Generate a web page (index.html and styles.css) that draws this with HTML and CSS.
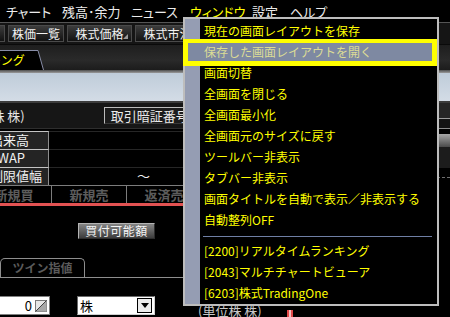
FILE: index.html
```html
<!DOCTYPE html>
<html lang="ja">
<head>
<meta charset="utf-8">
<title>Window menu</title>
<link rel="stylesheet" href="styles.css">
</head>
<body>
<div class="screen">
  <nav class="menubar">
    <span class="mb mb-chart">チャート</span>
    <span class="mb mb-zan">残高･余力</span>
    <span class="mb mb-news">ニュース</span>
    <span class="mb mb-win">ウィンドウ</span>
    <span class="mb mb-set">設定</span>
    <span class="mb">ヘルプ</span>
  </nav>

  <div class="toolbar">
    <span class="tbtn tbtn-cut"></span>
    <span class="tbtn tbtn-w56">株価一覧</span>
    <span class="tbtn tbtn-w65 tbtn-mark">株式価格</span>
    <span class="tbtn tbtn-w65">株式市況</span>
    <span class="tbtn tbtn-w65"></span>
    <span class="tbtn tbtn-w65"></span>
  </div>

  <div class="tabstrip">
    <div class="wtab">
      <svg class="wtab-shape" width="44" height="20" viewBox="0 0 44 20">
        <path d="M0 0.5 H38 L43.5 20 H0 Z" fill="#000"/>
        <polyline points="0,0.5 38,0.5 43.5,20" fill="none" stroke="#878ca6" stroke-width="1"/>
      </svg>
      <span class="wtab-text">ランキング</span>
    </div>
  </div>
  <div class="strip-sep"></div>
  <div class="lightarea"></div>
  <div class="panel-sep"></div>

  <div class="panel">
    <div class="panel-main">
      <div class="phead">
        <span class="unit">(単位株 株)</span>
        <span class="pinbox">取引暗証番号</span>
      </div>
      <div class="qrows">
        <div class="qrow"><span class="qlabel">出来高</span><span class="qval"></span></div>
        <div class="qrow"><span class="qlabel">VWAP</span><span class="qval"></span></div>
        <div class="qrow"><span class="qlabel">制限値幅</span><span class="qval qval-range">～</span></div>
      </div>
      <div class="otabs">
        <span class="otab">新規買</span>
        <span class="otab">新規売</span>
        <span class="otab">返済売</span>
      </div>
      <div class="redline"></div>
      <div class="btnrow"><span class="gbtn">買付可能額</span></div>
      <div class="subtabs"><span class="subtab">ツイン指値</span></div>
      <div class="inputrow">
        <span class="numin">
          <span class="numval">0</span>
          <svg class="spin" width="12" height="12" viewBox="0 0 12 12">
            <rect x="0.5" y="0.5" width="11" height="11" fill="#e6e6e6" stroke="#7a7a7a"/>
            <polygon points="11.5,0.5 11.5,11.5 0.5,11.5" fill="#a8a8a8"/>
            <line x1="0.5" y1="11.5" x2="11.5" y2="0.5" stroke="#404040" stroke-width="1"/>
          </svg>
        </span>
        <span class="sel">
          <span class="selval">株</span>
          <span class="selbtn">
            <svg width="8" height="5" viewBox="0 0 8 5"><polygon points="0,0 8,0 4,5" fill="#000"/></svg>
          </span>
        </span>
        <span class="unit2">(単位株 株)</span>
        <span class="redmark"></span>
      </div>
    </div>
    <div class="panel-side">
      <div class="ps1"></div>
      <div class="ps2"></div>
      <div class="ps3"></div>
      <div class="ps4"></div>
      <div class="ps5"></div>
    </div>
  </div>

  <div class="menu">
    <div class="mi">現在の画面レイアウトを保存</div>
    <div class="mi mi-active"><span>保存した画面レイアウトを開く</span></div>
    <div class="mi">画面切替</div>
    <div class="mi">全画面を閉じる</div>
    <div class="mi">全画面最小化</div>
    <div class="mi">全画面元のサイズに戻す</div>
    <div class="mi">ツールバー非表示</div>
    <div class="mi">タブバー非表示</div>
    <div class="mi">画面タイトルを自動で表示／非表示する</div>
    <div class="mi">自動整列OFF</div>
    <div class="msep"></div>
    <div class="mi">[2200]リアルタイムランキング</div>
    <div class="mi">[2043]マルチチャートビューア</div>
    <div class="mi">[6203]株式TradingOne</div>
  </div>
</div>
</body>
</html>
```

FILE: styles.css
```css
* {
  box-sizing: border-box;
  margin: 0;
  padding: 0;
}

html,
body {
  width: 450px;
  height: 317px;
  overflow: hidden;
  background: #000;
}

body {
  font-family: "Noto Sans CJK JP", "DejaVu Sans", sans-serif;
  color: #fff;
}

.screen {
  position: relative;
  width: 450px;
  height: 317px;
  overflow: hidden;
  background: #000;
}

/* ---------- menubar ---------- */
.menubar {
  display: flex;
  height: 22px;
  padding-left: 6px;
  padding-top: 1px;
  background: #000;
  font-size: 13px;
  line-height: 22px;
  color: #ececec;
  font-feature-settings: "palt";
  white-space: nowrap;
}

.mb {
  flex: none;
}

.mb-chart { width: 56px; }
.mb-zan { width: 69px; }
.mb-news { width: 59px; }
.mb-win { width: 62px; color: #ffff00; }
.mb-set { width: 38px; }

/* ---------- toolbar ---------- */
.toolbar {
  display: flex;
  gap: 3px;
  height: 23px;
  margin-left: -50px;
  padding-top: 2px;
  background: #151515;
  border-top: 1px solid #555;
  border-bottom: 1px solid #0a0a0a;
}

.tbtn {
  position: relative;
  flex: none;
  height: 17px;
  border: 1px solid #4a4a4a;
  background: linear-gradient(#3c3c3c, #121212);
  font-size: 12px;
  line-height: 16px;
  color: #f2f2f2;
  text-align: center;
  white-space: nowrap;
  overflow: hidden;
}

.tbtn-cut { width: 55px; }
.tbtn-w56 { width: 56px; }
.tbtn-w65 { width: 65px; }

.tbtn-mark::after {
  content: "";
  position: absolute;
  right: 3px;
  bottom: 2px;
  width: 0;
  height: 0;
  border-left: 5px solid transparent;
  border-bottom: 5px solid #9a9a9a;
}

/* ---------- window tab strip ---------- */
.tabstrip {
  height: 25px;
  padding-top: 5px;
  background: linear-gradient(#1e1e1e, #2a2a2a 60%, #1c1c1c);
}

.wtab {
  position: relative;
  width: 44px;
  height: 20px;
}

.wtab-shape {
  position: absolute;
  left: 0;
  top: 0;
}

.wtab-text {
  position: relative;
  display: block;
  margin-left: -35px;
  font-size: 12px;
  line-height: 20px;
  color: #ffff00;
  white-space: nowrap;
}

.strip-sep {
  height: 3px;
  background: linear-gradient(#4e4e4e, #9a9a9a);
}

.lightarea {
  height: 28px;
  background: linear-gradient(#bfccd9, #d3dce6);
}

.panel-sep {
  height: 2px;
  background: #3c3c3c;
}

/* ---------- order panel ---------- */
.panel {
  display: flex;
  height: 214px;
  background: #000;
}

.panel-main {
  flex: 1;
  min-width: 0;
}

.phead {
  display: flex;
  align-items: center;
  height: 25px;
  background: #161616;
  white-space: nowrap;
}

.unit {
  flex: none;
  margin-left: -39px;
  font-size: 13px;
  color: #e6e6e6;
}

.pinbox {
  flex: none;
  width: 100px;
  height: 17px;
  margin-left: 79px;
  padding-left: 6px;
  border: 1px solid;
  border-color: #bcbcbc #3a3a3a #3a3a3a #bcbcbc;
  background: #1c1c1c;
  font-size: 13px;
  line-height: 15px;
  color: #eaeaea;
}

.qrows {
  border-top: 1px solid #2e2e2e;
  padding-top: 2px;
}

.qrow {
  display: flex;
  height: 18px;
}

.qlabel {
  flex: none;
  width: 61px;
  margin-left: -12px;
  padding-left: 2px;
  border-top: 1px solid #c4c4c4;
  border-right: 1px solid #8e8e8e;
  background: #242424;
  font-size: 13px;
  line-height: 16px;
  color: #f0f0f0;
  white-space: nowrap;
}

.qval {
  flex: 1;
  border-top: 1px solid #262626;
  font-size: 13px;
  line-height: 16px;
  color: #f0f0f0;
}

.qval-range {
  padding-left: 88px;
}

.otabs {
  display: flex;
  height: 18px;
  margin-left: -23px;
  border-top: 1px solid #7c7c7c;
}

.otab {
  flex: none;
  width: 75px;
  border-right: 1px solid #7c7c7c;
  font-size: 13px;
  font-weight: bold;
  line-height: 17px;
  color: #5c5c5c;
  text-align: center;
}

.redline {
  height: 3px;
  background: #e25252;
}

.btnrow {
  padding-top: 17px;
  padding-left: 78px;
  height: 33px;
}

.gbtn {
  display: block;
  width: 77px;
  height: 16px;
  border: 1px solid;
  border-color: #b4b4b4 #2c2c2c #2c2c2c #b4b4b4;
  background: linear-gradient(#858585, #3c3c3c);
  font-size: 12px;
  line-height: 14px;
  letter-spacing: 0.5px;
  color: #f4f4f4;
  text-align: center;
}

.subtabs {
  height: 20px;
  margin-top: 19px;
  border-bottom: 1px solid #8e8e8e;
}

.subtab {
  display: block;
  width: 85px;
  height: 19px;
  border: 1px solid #8e8e8e;
  border-bottom: none;
  border-radius: 5px 5px 0 0;
  font-size: 12px;
  font-weight: bold;
  line-height: 18px;
  color: #5a5a5a;
  text-align: center;
}

.inputrow {
  display: flex;
  align-items: flex-start;
  height: 21px;
  margin-top: 18px;
  white-space: nowrap;
}

.numin {
  flex: none;
  display: flex;
  align-items: center;
  justify-content: flex-end;
  gap: 3px;
  width: 60px;
  height: 19px;
  margin-left: -10px;
  padding-right: 2px;
  background: #fff;
  border: 1px solid #808080;
}

.numval {
  font-size: 13px;
  line-height: 17px;
  color: #000;
}

.spin {
  flex: none;
}

.sel {
  flex: none;
  display: flex;
  align-items: center;
  justify-content: space-between;
  width: 78px;
  height: 19px;
  margin-left: 27px;
  padding: 0 2px 0 2px;
  background: #fff;
  border: 1px solid;
  border-color: #6a6a6a #d0d0d0 #d0d0d0 #6a6a6a;
}

.selval {
  font-size: 13px;
  line-height: 17px;
  color: #000;
}

.selbtn {
  display: flex;
  align-items: center;
  justify-content: center;
  width: 15px;
  height: 15px;
  border: 1px solid #000;
  background: #ececec;
}

.unit2 {
  flex: none;
  margin-left: 43px;
  margin-top: 7px;
  font-size: 13px;
  line-height: 16px;
  color: #c8c8c8;
}

.redmark {
  flex: none;
  width: 6px;
  height: 10px;
  margin-left: 25px;
  margin-top: 14px;
  border-left: 2px solid #e04848;
  border-right: 2px solid #e04848;
  background: #f3c0c0;
}

.panel-side {
  flex: none;
  width: 13px;
}

.ps1 {
  height: 16px;
  background: #262626;
  border-bottom: 1px solid #9a9a9a;
}

.ps2 {
  height: 10px;
  background: #141414;
  border-bottom: 1px solid #8a8a8a;
}

.ps3 {
  height: 13px;
  margin-top: 5px;
  background: linear-gradient(#a6a6a6, #4a4a4a);
}

.ps4 {
  height: 21px;
  background: #1c1c1c;
}

.ps5 {
  margin-top: 9px;
  border-top: 1px dashed #707070;
}

/* ---------- dropdown menu ---------- */
.menu {
  position: absolute;
  left: 183px;
  top: 17px;
  width: 256px;
  height: 289px;
  padding: 2px 0;
  border: 2px solid #bdbdbd;
  background: linear-gradient(to right, #959db3 0 15px, #000 15px);
  font-size: 12px;
  color: #ffff00;
  white-space: nowrap;
}

.mi {
  position: relative;
  height: 21px;
  padding-left: 19px;
  line-height: 20px;
}

.mi-active {
  color: #dcdc96;
}

.mi-active::before {
  content: "";
  position: absolute;
  left: -2px;
  right: 0;
  top: -3px;
  bottom: -3px;
  border: 5px solid #ffff00;
  border-top-width: 4px;
  background: #7e89a2;
}

.mi-active span {
  position: relative;
}

.msep {
  height: 10px;
  margin: 0 5px 0 18px;
  background: linear-gradient(transparent 5px, #6f7fa5 5px, #6f7fa5 6px, transparent 6px);
}
```
